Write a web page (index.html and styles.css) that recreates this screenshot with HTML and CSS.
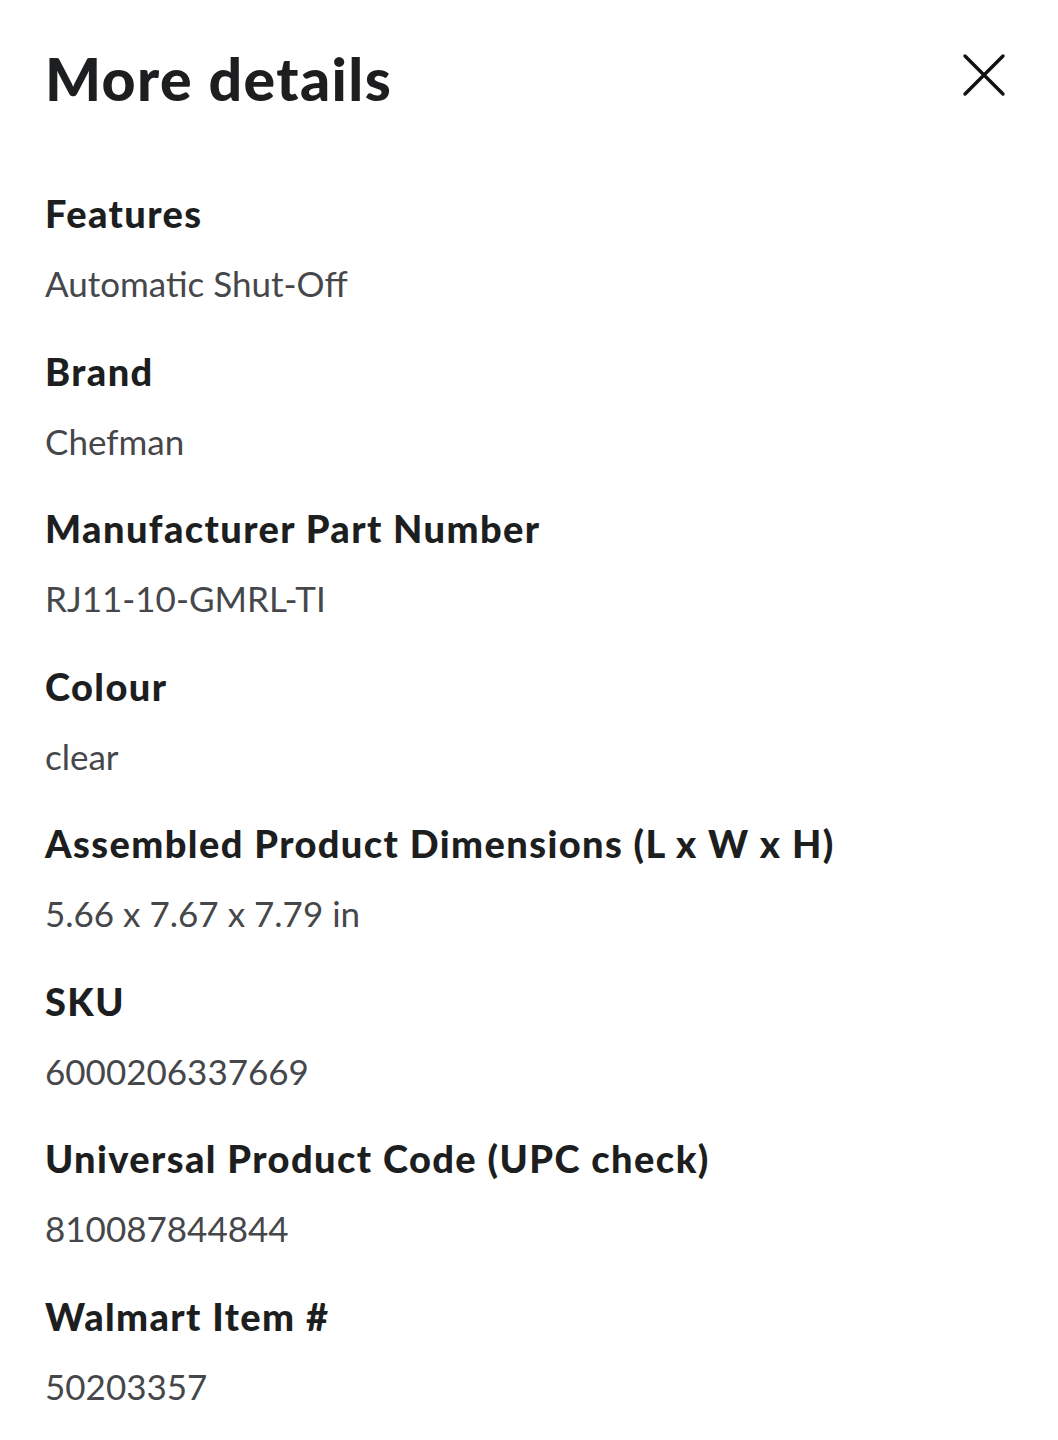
FILE: index.html
```html
<!DOCTYPE html>
<html lang="en">
<head>
<meta charset="utf-8">
<title>More details</title>
<link rel="stylesheet" href="styles.css">
</head>
<body>
<div class="panel">
  <header class="head">
    <h1 class="title">More details</h1>
    <button class="close" aria-label="Close">
      <svg width="44" height="44" viewBox="0 0 44 44"><path d="M3 3 L41 41 M41 3 L3 41" stroke="#111" stroke-width="3.4" stroke-linecap="round" fill="none"/></svg>
    </button>
  </header>
  <dl class="list">
    <div class="item"><dt>Features</dt><dd>Automatic Shut-Off</dd></div>
    <div class="item"><dt>Brand</dt><dd>Chefman</dd></div>
    <div class="item"><dt>Manufacturer Part Number</dt><dd>RJ11-10-GMRL-TI</dd></div>
    <div class="item"><dt>Colour</dt><dd>clear</dd></div>
    <div class="item"><dt>Assembled Product Dimensions (L x W x H)</dt><dd>5.66 x 7.67 x 7.79 in</dd></div>
    <div class="item"><dt>SKU</dt><dd>6000206337669</dd></div>
    <div class="item"><dt>Universal Product Code (UPC check)</dt><dd>810087844844</dd></div>
    <div class="item"><dt>Walmart Item #</dt><dd>50203357</dd></div>
  </dl>
</div>
</body>
</html>
```
FILE: styles.css
```css
html, body {
  margin: 0;
  padding: 0;
  background: #ffffff;
}
body {
  font-family: Lato, "Open Sans", Arial, sans-serif;
  color: #2e2f32;
}
.panel {
  padding: 44px 52px 0 45px;
}
.head {
  display: flex;
  justify-content: space-between;
  align-items: flex-start;
}
.title {
  margin: 0;
  font-size: 59px;
  line-height: 70px;
  font-weight: 900;
  letter-spacing: 1.4px;
  color: #1d1e20;
}
.close {
  border: 0;
  background: none;
  padding: 0;
  margin-top: 9px;
  width: 44px;
  height: 44px;
  cursor: pointer;
}
.close svg { display: block; }
.list {
  margin: 75px 0 0 0;
  display: flex;
  flex-direction: column;
  gap: 39.5px;
}
.item dt {
  font-size: 38px;
  line-height: 48px;
  font-weight: 900;
  color: #1d1e20;
  letter-spacing: 1.4px;
}
.item dd {
  margin: 22px 0 0 0;
  font-size: 35px;
  line-height: 48px;
  font-weight: 400;
  color: #46474a;
}
```
